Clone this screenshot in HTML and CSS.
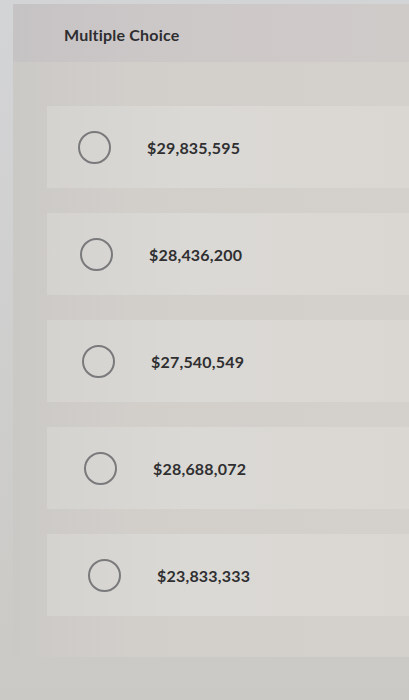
FILE: index.html
```html
<!DOCTYPE html>
<html lang="en">
<head>
    <meta charset="UTF-8">
    <meta name="viewport" content="width=device-width, initial-scale=1.0">
    <title>Multiple Choice</title>
    <link rel="stylesheet" href="styles.css">
</head>
<body>
    <div class="screen">
        <div class="panel">
            <div class="panel-header">Multiple Choice</div>
            <div class="choices">
                <label class="choice"><span class="radio"></span><span class="choice-text">$29,835,595</span></label>
                <label class="choice"><span class="radio"></span><span class="choice-text">$28,436,200</span></label>
                <label class="choice"><span class="radio"></span><span class="choice-text">$27,540,549</span></label>
                <label class="choice"><span class="radio"></span><span class="choice-text">$28,688,072</span></label>
                <label class="choice"><span class="radio"></span><span class="choice-text">$23,833,333</span></label>
            </div>
        </div>
    </div>
</body>
</html>
```

FILE: styles.css
```css
body {
    font-family: Lato, 'Open Sans', sans-serif;
    background-color: #d2d3d4;
    margin: 0;
}
.screen {
    padding: 4px 0 0 13px;
    height: 696px;
    background: linear-gradient(to bottom, #d3d4d6, #cac9c5);
}
.panel {
    height: 653px;
    background: linear-gradient(to right, #cbc9c6, #d2cfcb 30%, #d4d1cc);
}
.panel-header {
    height: 58px;
    box-sizing: border-box;
    padding: 21px 0 0 51px;
    background: linear-gradient(to right, #c6c3c4, #cdc8c8 40%, #cfcbc9);
    color: #2e2e30;
    font-size: 16px;
    font-weight: bold;
    letter-spacing: 0.2px;
}
.choices {
    display: flex;
    flex-direction: column;
    gap: 25px;
    padding: 44px 0 0 34px;
}
.choice {
    display: flex;
    align-items: center;
    height: 82px;
    padding-left: 31px;
    background: linear-gradient(to right, #d5d3cf, #dbd9d5 40%, #dad7d2);
}
.choice:nth-child(2) { padding-left: 33px; }
.choice:nth-child(3) { padding-left: 35px; }
.choice:nth-child(4) { padding-left: 37px; }
.choice:nth-child(5) { padding-left: 41px; }
.radio {
    width: 29px;
    height: 29px;
    border: 2px solid #7a7a7c;
    border-radius: 50%;
    flex-shrink: 0;
}
.choice-text {
    margin-left: 36px;
    color: #2f2f31;
    font-size: 16px;
    font-weight: bold;
    letter-spacing: 0.2px;
}
```
